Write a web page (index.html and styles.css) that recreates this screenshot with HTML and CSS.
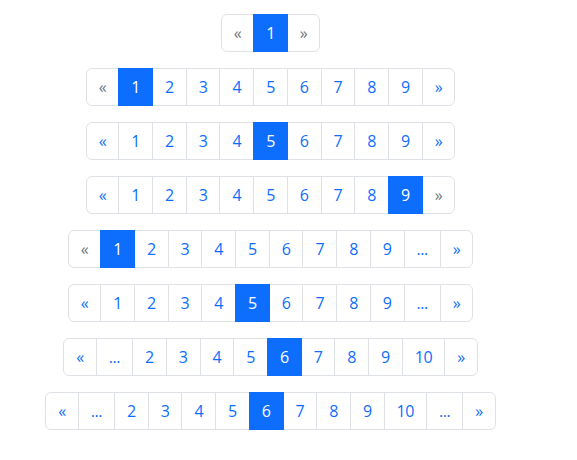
FILE: index.html
```html
<!DOCTYPE html>
<html lang="en">
<head>
    <meta charset="UTF-8">
    <meta name="viewport" content="width=device-width, initial-scale=1.0">
    <title>Pagination</title>
    <link rel="stylesheet" href="styles.css">
</head>
<body>
    <div class="container">
        <!-- single page -->
        <ul class="pagination">
            <li class="page-item disabled"><a class="page-link" href="#">&laquo;</a></li>
            <li class="page-item active"><a class="page-link" href="#">1</a></li>
            <li class="page-item disabled"><a class="page-link" href="#">&raquo;</a></li>
        </ul>

        <!-- 9 pages -->
        <ul class="pagination">
            <li class="page-item disabled"><a class="page-link" href="#">&laquo;</a></li>
            <li class="page-item active"><a class="page-link" href="#">1</a></li>
            <li class="page-item"><a class="page-link" href="#">2</a></li>
            <li class="page-item"><a class="page-link" href="#">3</a></li>
            <li class="page-item"><a class="page-link" href="#">4</a></li>
            <li class="page-item"><a class="page-link" href="#">5</a></li>
            <li class="page-item"><a class="page-link" href="#">6</a></li>
            <li class="page-item"><a class="page-link" href="#">7</a></li>
            <li class="page-item"><a class="page-link" href="#">8</a></li>
            <li class="page-item"><a class="page-link" href="#">9</a></li>
            <li class="page-item"><a class="page-link" href="#">&raquo;</a></li>
        </ul>

        <ul class="pagination">
            <li class="page-item"><a class="page-link" href="#">&laquo;</a></li>
            <li class="page-item"><a class="page-link" href="#">1</a></li>
            <li class="page-item"><a class="page-link" href="#">2</a></li>
            <li class="page-item"><a class="page-link" href="#">3</a></li>
            <li class="page-item"><a class="page-link" href="#">4</a></li>
            <li class="page-item active"><a class="page-link" href="#">5</a></li>
            <li class="page-item"><a class="page-link" href="#">6</a></li>
            <li class="page-item"><a class="page-link" href="#">7</a></li>
            <li class="page-item"><a class="page-link" href="#">8</a></li>
            <li class="page-item"><a class="page-link" href="#">9</a></li>
            <li class="page-item"><a class="page-link" href="#">&raquo;</a></li>
        </ul>

        <ul class="pagination">
            <li class="page-item"><a class="page-link" href="#">&laquo;</a></li>
            <li class="page-item"><a class="page-link" href="#">1</a></li>
            <li class="page-item"><a class="page-link" href="#">2</a></li>
            <li class="page-item"><a class="page-link" href="#">3</a></li>
            <li class="page-item"><a class="page-link" href="#">4</a></li>
            <li class="page-item"><a class="page-link" href="#">5</a></li>
            <li class="page-item"><a class="page-link" href="#">6</a></li>
            <li class="page-item"><a class="page-link" href="#">7</a></li>
            <li class="page-item"><a class="page-link" href="#">8</a></li>
            <li class="page-item active"><a class="page-link" href="#">9</a></li>
            <li class="page-item disabled"><a class="page-link" href="#">&raquo;</a></li>
        </ul>

        <!-- many pages, with ellipsis -->
        <ul class="pagination">
            <li class="page-item disabled"><a class="page-link" href="#">&laquo;</a></li>
            <li class="page-item active"><a class="page-link" href="#">1</a></li>
            <li class="page-item"><a class="page-link" href="#">2</a></li>
            <li class="page-item"><a class="page-link" href="#">3</a></li>
            <li class="page-item"><a class="page-link" href="#">4</a></li>
            <li class="page-item"><a class="page-link" href="#">5</a></li>
            <li class="page-item"><a class="page-link" href="#">6</a></li>
            <li class="page-item"><a class="page-link" href="#">7</a></li>
            <li class="page-item"><a class="page-link" href="#">8</a></li>
            <li class="page-item"><a class="page-link" href="#">9</a></li>
            <li class="page-item"><a class="page-link" href="#">...</a></li>
            <li class="page-item"><a class="page-link" href="#">&raquo;</a></li>
        </ul>

        <ul class="pagination">
            <li class="page-item"><a class="page-link" href="#">&laquo;</a></li>
            <li class="page-item"><a class="page-link" href="#">1</a></li>
            <li class="page-item"><a class="page-link" href="#">2</a></li>
            <li class="page-item"><a class="page-link" href="#">3</a></li>
            <li class="page-item"><a class="page-link" href="#">4</a></li>
            <li class="page-item active"><a class="page-link" href="#">5</a></li>
            <li class="page-item"><a class="page-link" href="#">6</a></li>
            <li class="page-item"><a class="page-link" href="#">7</a></li>
            <li class="page-item"><a class="page-link" href="#">8</a></li>
            <li class="page-item"><a class="page-link" href="#">9</a></li>
            <li class="page-item"><a class="page-link" href="#">...</a></li>
            <li class="page-item"><a class="page-link" href="#">&raquo;</a></li>
        </ul>

        <ul class="pagination">
            <li class="page-item"><a class="page-link" href="#">&laquo;</a></li>
            <li class="page-item"><a class="page-link" href="#">...</a></li>
            <li class="page-item"><a class="page-link" href="#">2</a></li>
            <li class="page-item"><a class="page-link" href="#">3</a></li>
            <li class="page-item"><a class="page-link" href="#">4</a></li>
            <li class="page-item"><a class="page-link" href="#">5</a></li>
            <li class="page-item active"><a class="page-link" href="#">6</a></li>
            <li class="page-item"><a class="page-link" href="#">7</a></li>
            <li class="page-item"><a class="page-link" href="#">8</a></li>
            <li class="page-item"><a class="page-link" href="#">9</a></li>
            <li class="page-item"><a class="page-link" href="#">10</a></li>
            <li class="page-item"><a class="page-link" href="#">&raquo;</a></li>
        </ul>

        <ul class="pagination">
            <li class="page-item"><a class="page-link" href="#">&laquo;</a></li>
            <li class="page-item"><a class="page-link" href="#">...</a></li>
            <li class="page-item"><a class="page-link" href="#">2</a></li>
            <li class="page-item"><a class="page-link" href="#">3</a></li>
            <li class="page-item"><a class="page-link" href="#">4</a></li>
            <li class="page-item"><a class="page-link" href="#">5</a></li>
            <li class="page-item active"><a class="page-link" href="#">6</a></li>
            <li class="page-item"><a class="page-link" href="#">7</a></li>
            <li class="page-item"><a class="page-link" href="#">8</a></li>
            <li class="page-item"><a class="page-link" href="#">9</a></li>
            <li class="page-item"><a class="page-link" href="#">10</a></li>
            <li class="page-item"><a class="page-link" href="#">...</a></li>
            <li class="page-item"><a class="page-link" href="#">&raquo;</a></li>
        </ul>
    </div>
</body>
</html>
```

FILE: styles.css
```css
body {
    font-family: "Open Sans", "Noto Sans", sans-serif;
    font-size: 16px;
    line-height: 1.5;
    color: #212529;
    background-color: #fff;
    margin: 0;
}
.container {
    width: 541px;
    padding-top: 14px;
}
.pagination {
    display: flex;
    justify-content: center;
    list-style: none;
    padding: 0;
    margin: 0 0 16px 0;
}
.page-item:not(:first-child) .page-link {
    margin-left: -1px;
}
.page-item:first-child .page-link {
    border-radius: 6px 0 0 6px;
}
.page-item:last-child .page-link {
    border-radius: 0 6px 6px 0;
}
.page-link {
    position: relative;
    display: block;
    padding: 6px 12px;
    color: #0d6efd;
    letter-spacing: -0.45px;
    text-decoration: none;
    background-color: #fff;
    border: 1px solid #dee2e6;
}
.page-item.active .page-link {
    z-index: 3;
    color: #fff;
    background-color: #0d6efd;
    border-color: #0d6efd;
}
.page-item.disabled .page-link {
    color: #6c757d;
    pointer-events: none;
}
```
